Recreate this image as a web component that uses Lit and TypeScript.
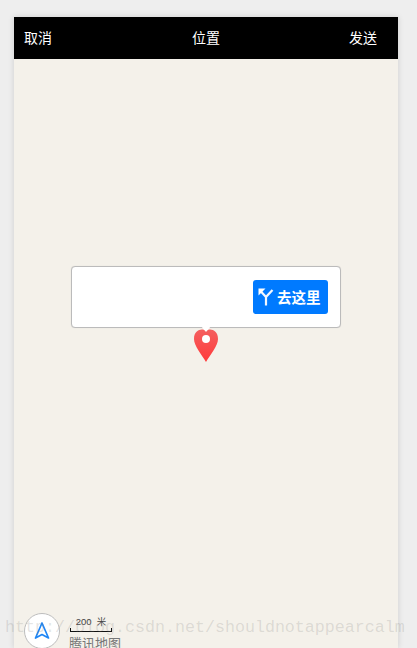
import { LitElement, html, css } from "lit";
import { customElement } from "lit/decorators.js";

@customElement("app-root")
export class AppRoot extends LitElement {
  static styles = css`
    :host {
      display: block;
      width: 417px;
      height: 648px;
      overflow: hidden;
      position: relative;
      background: #eeeeee;
      font-family: "Liberation Sans", "Noto Sans CJK SC", sans-serif;
    }
    .frame {
      box-sizing: border-box;
      height: 648px;
      padding: 17px 19px 0 14px;
    }
    .phone {
      height: 631px;
      display: flex;
      flex-direction: column;
      box-shadow: 0 0 6px rgba(0, 0, 0, 0.14);
    }
    .nav {
      height: 42px;
      flex: none;
      box-sizing: border-box;
      background: #000;
      color: #fff;
      font-size: 14px;
      display: grid;
      grid-template-columns: 1fr auto 1fr;
      align-items: center;
      padding: 0 10px 2px;
    }
    .nav .right { justify-self: end; margin-right: 11px; }
    .map {
      flex: 1;
      background: #f4f1ea;
      position: relative;
    }
    .bubble {
      position: absolute;
      left: 57px;
      top: 207px;
      width: 270px;
      height: 62px;
      box-sizing: border-box;
      background: #fff;
      border: 1px solid #bbbbbb;
      border-radius: 4px;
      box-shadow: 0 0 1px rgba(0, 0, 0, 0.15);
      display: flex;
      align-items: center;
      justify-content: flex-end;
      padding-right: 12px;
    }
    .go {
      width: 75px;
      height: 34px;
      background: #007aff;
      border-radius: 3px;
      color: #fff;
      font-size: 14.5px;
      font-weight: 700;
      display: flex;
      align-items: center;
      gap: 3px;
      padding: 0 0 2px 5px;
      box-sizing: border-box;
    }
    .go svg { display: block; flex: none; margin-top: 2px; }
    .pin {
      position: absolute;
      left: 178px;
      top: 267px;
      display: block;
    }
    .locate {
      position: absolute;
      left: 10px;
      top: 554px;
      width: 36px;
      height: 36px;
      box-sizing: border-box;
      border-radius: 50%;
      background: #fff;
      border: 1px solid #bdbdbd;
      display: flex;
      align-items: center;
      justify-content: center;
    }
    .scale {
      position: absolute;
      left: 56px;
      top: 557px;
      width: 42px;
      display: flex;
      flex-direction: column;
      font-size: 9.5px;
      line-height: 12px;
      color: #444;
      text-align: center;
      white-space: pre;
    }
    .bar {
      height: 4px;
      box-sizing: border-box;
      border: 1px solid #111;
      border-top: none;
    }
    .brand {
      position: absolute;
      left: 55px;
      top: 577px;
      font-size: 13px;
      line-height: 15px;
      color: #777;
      white-space: nowrap;
    }
    .mark {
      position: absolute;
      left: 5px;
      top: 618px;
      font-family: "Liberation Mono", monospace;
      font-size: 16.67px;
      line-height: 20px;
      color: rgba(120, 120, 120, 0.2);
      white-space: nowrap;
      pointer-events: none;
    }
  `;

  render() {
    return html`
      <div class="frame">
        <div class="phone">
          <div class="nav">
            <span>取消</span>
            <span>位置</span>
            <span class="right">发送</span>
          </div>
          <div class="map">
            <div class="bubble">
              <div class="go">
                <svg width="16" height="18" viewBox="0 0 16 18" fill="none">
                  <path d="M8 17.5V9L14.5 2M8 9L2.5 3" stroke="#f2f7ff" stroke-width="2.2"></path>
                  <path d="M0.5 0.5H7.5L0.5 7.5Z" fill="#fff"></path>
                </svg>
                <span>去这里</span>
              </div>
            </div>
            <svg class="pin" width="28" height="38" viewBox="0 0 28 38">
              <defs>
                <linearGradient id="pg" x1="0" y1="0" x2="0" y2="1">
                  <stop offset="0" stop-color="#f45f5f"></stop>
                  <stop offset="1" stop-color="#ff3a3a"></stop>
                </linearGradient>
              </defs>
              <path d="M14 5 C11 2 2 3 2 13 C2 20 10 29 14 36 C18 29 26 20 26 13 C26 3 17 2 14 5Z" fill="url(#pg)"></path>
              <path d="M9 0h10L14 6z" fill="#fff"></path>
              <circle cx="14" cy="13" r="4" fill="#fff"></circle>
            </svg>
            <div class="locate">
              <svg width="18" height="20" viewBox="0 0 18 20" fill="none">
                <path d="M9 2 L15.5 17 L9 13.5 L2.5 17 Z" stroke="#1f86f5" stroke-width="1.7" stroke-linejoin="round"></path>
              </svg>
            </div>
            <div class="scale"><span>200  米</span><div class="bar"></div></div>
            <div class="brand">腾讯地图</div>
          </div>
        </div>
      </div>
      <div class="mark">http://blog.csdn.net/shouldnotappearcalm</div>
    `;
  }
}
